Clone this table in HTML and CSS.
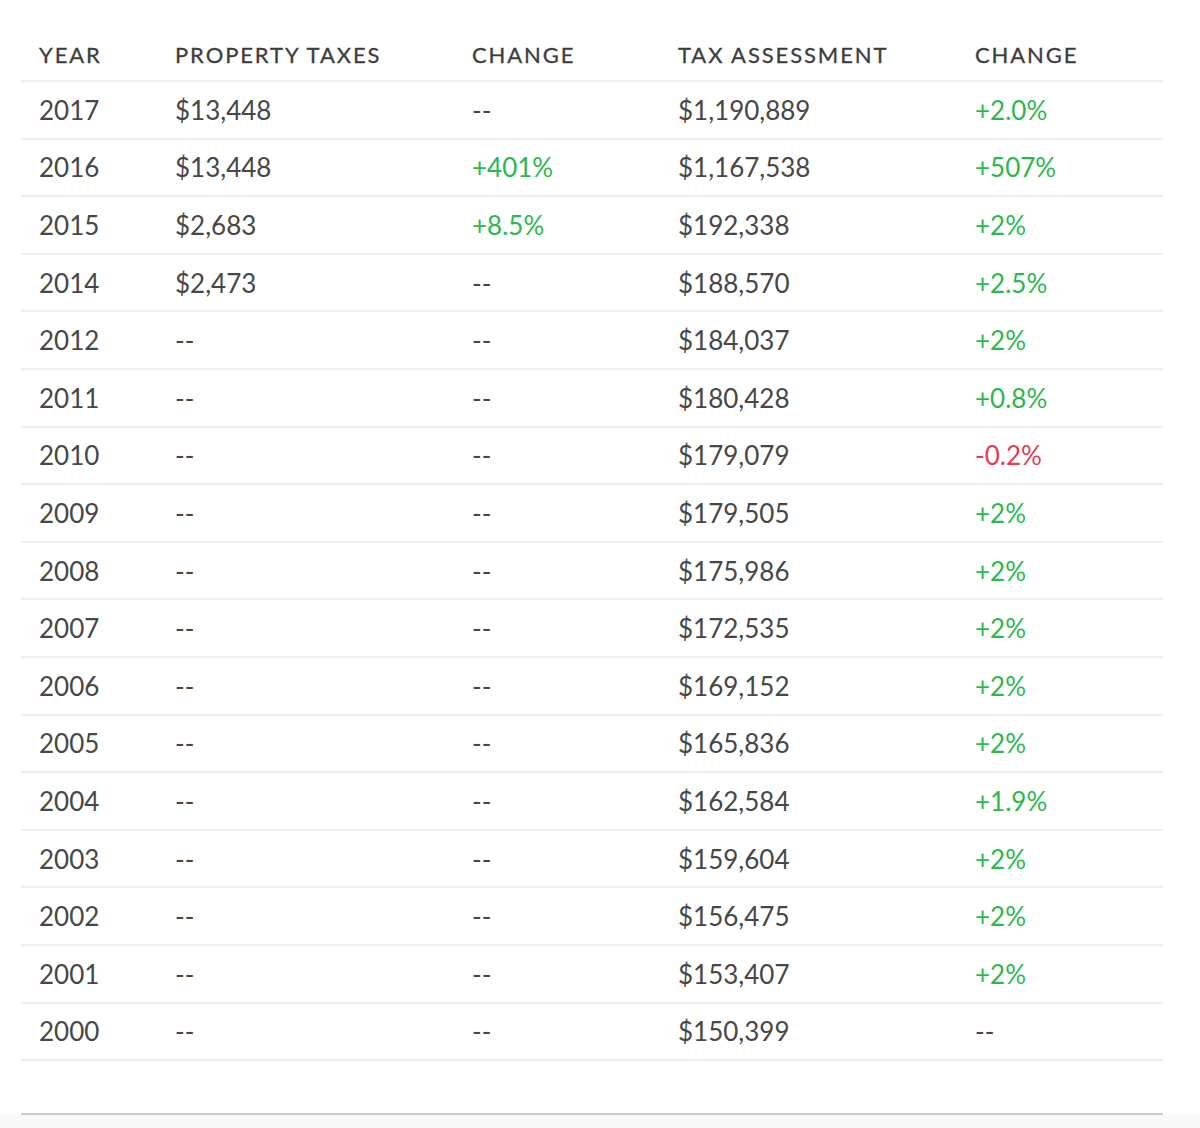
FILE: index.html
```html
<!DOCTYPE html>
<html>
<head>
<meta charset="utf-8">
<link rel="stylesheet" href="styles.css">
</head>
<body>
<div class="page">
  <table class="tax">
    <colgroup>
      <col class="c1"><col class="c2"><col class="c3"><col class="c4"><col class="c5">
    </colgroup>
    <thead>
      <tr><th>YEAR</th><th>PROPERTY TAXES</th><th>CHANGE</th><th>TAX ASSESSMENT</th><th>CHANGE</th></tr>
    </thead>
    <tbody>
      <tr><td>2017</td><td>$13,448</td><td>--</td><td>$1,190,889</td><td class="up">+2.0%</td></tr>
      <tr><td>2016</td><td>$13,448</td><td class="up">+401%</td><td>$1,167,538</td><td class="up">+507%</td></tr>
      <tr><td>2015</td><td>$2,683</td><td class="up">+8.5%</td><td>$192,338</td><td class="up">+2%</td></tr>
      <tr><td>2014</td><td>$2,473</td><td>--</td><td>$188,570</td><td class="up">+2.5%</td></tr>
      <tr><td>2012</td><td>--</td><td>--</td><td>$184,037</td><td class="up">+2%</td></tr>
      <tr><td>2011</td><td>--</td><td>--</td><td>$180,428</td><td class="up">+0.8%</td></tr>
      <tr><td>2010</td><td>--</td><td>--</td><td>$179,079</td><td class="down">-0.2%</td></tr>
      <tr><td>2009</td><td>--</td><td>--</td><td>$179,505</td><td class="up">+2%</td></tr>
      <tr><td>2008</td><td>--</td><td>--</td><td>$175,986</td><td class="up">+2%</td></tr>
      <tr><td>2007</td><td>--</td><td>--</td><td>$172,535</td><td class="up">+2%</td></tr>
      <tr><td>2006</td><td>--</td><td>--</td><td>$169,152</td><td class="up">+2%</td></tr>
      <tr><td>2005</td><td>--</td><td>--</td><td>$165,836</td><td class="up">+2%</td></tr>
      <tr><td>2004</td><td>--</td><td>--</td><td>$162,584</td><td class="up">+1.9%</td></tr>
      <tr><td>2003</td><td>--</td><td>--</td><td>$159,604</td><td class="up">+2%</td></tr>
      <tr><td>2002</td><td>--</td><td>--</td><td>$156,475</td><td class="up">+2%</td></tr>
      <tr><td>2001</td><td>--</td><td>--</td><td>$153,407</td><td class="up">+2%</td></tr>
      <tr><td>2000</td><td>--</td><td>--</td><td>$150,399</td><td>--</td></tr>
    </tbody>
  </table>
  <div class="spacer"></div>
</div>
<div class="below"></div>
</body>
</html>
```

FILE: styles.css
```css
html, body {
  margin: 0;
  padding: 0;
  background: #ffffff;
}
body {
  font-family: "Lato", "Liberation Sans", sans-serif;
  color: #444444;
}
.page {
  padding: 0 37px 0 21px;
}
.tax {
  width: 1142px;
  border-collapse: separate;
  border-spacing: 0;
  table-layout: fixed;
}
.c1 { width: 136px; }
.c2 { width: 297px; }
.c3 { width: 206px; }
.c4 { width: 297px; }
.c5 { width: 206px; }
.tax th {
  text-align: left;
  font-weight: 400;
  font-size: 22px;
  letter-spacing: 1.9px;
  line-height: 26px;
  padding: 42px 0 12px 18px;
  border-bottom: 2px solid #eeeeee;
  color: #3d3d3d;
  -webkit-text-stroke: 0.3px #3d3d3d;
  white-space: nowrap;
}
.tax td {
  font-size: 26px;
  line-height: 30px;
  height: 55.6px;
  box-sizing: border-box;
  padding: 12.8px 0 12.8px 18px;
  border-bottom: 2px solid #eeeeee;
  white-space: nowrap;
  color: #474747;
}
.tax tr { height: 57.6px; }
.tax td.up { color: #2cb84f; }
.tax td.down { color: #e23d54; }
.spacer {
  height: 52px;
  width: 1142px;
  border-bottom: 2px solid #cccccc;
}
.below {
  height: 20px;
  background: #f9f9f9;
}
```
